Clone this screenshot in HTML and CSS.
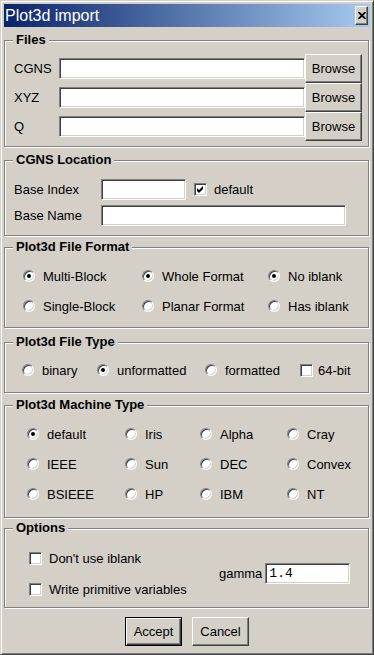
FILE: index.html
```html
<!DOCTYPE html>
<html>
<head>
	<title>Plot3d import</title>
	<meta name="viewport" content="width=device-width, initial-scale=1">
	<link rel="stylesheet" href="styles.css">
</head>
<body>
	<div class="window">
	<div class="titlebar">
		<span>Plot3d import</span>
		<span class="close-btn"><svg width="8" height="7" viewBox="0 0 8 7"><path d="M0.5 0 L7.5 7 M7.5 0 L0.5 7" stroke="#000" stroke-width="1.8"/></svg></span>
	</div>

	<fieldset class="group files">
		<legend>Files</legend>
		<div class="files-body">
			<span>CGNS</span><input class="field" type="text"><button class="btn">Browse</button>
			<span>XYZ</span><input class="field" type="text"><button class="btn">Browse</button>
			<span>Q</span><input class="field" type="text"><button class="btn">Browse</button>
		</div>
	</fieldset>

	<fieldset class="group location">
		<legend>CGNS Location</legend>
		<div class="location-body">
			<div class="row">
				<span class="row-label">Base Index</span>
				<input class="field short" type="text">
				<span class="check checked"><svg width="9" height="9" viewBox="0 0 9 9"><polygon points="1,3 3,5 7,1 7,4 3,8 1,6" fill="#000"/></svg></span>
				<span class="check-label">default</span>
			</div>
			<div class="row">
				<span class="row-label">Base Name</span>
				<input class="field long" type="text">
			</div>
		</div>
	</fieldset>

	<fieldset class="group format">
		<legend>Plot3d File Format</legend>
		<div class="format-body">
			<div class="opt"><span class="radio on"></span>Multi-Block</div>
			<div class="opt"><span class="radio on"></span>Whole Format</div>
			<div class="opt"><span class="radio on"></span>No iblank</div>
			<div class="opt"><span class="radio"></span>Single-Block</div>
			<div class="opt"><span class="radio"></span>Planar Format</div>
			<div class="opt"><span class="radio"></span>Has iblank</div>
		</div>
	</fieldset>

	<fieldset class="group filetype">
		<legend>Plot3d File Type</legend>
		<div class="type-body">
			<div class="opt"><span class="radio"></span>binary</div>
			<div class="opt"><span class="radio on"></span>unformatted</div>
			<div class="opt"><span class="radio"></span>formatted</div>
			<div class="opt tight"><span class="check"></span>64-bit</div>
		</div>
	</fieldset>

	<fieldset class="group machine">
		<legend>Plot3d Machine Type</legend>
		<div class="machine-body">
			<div class="opt"><span class="radio on"></span>default</div>
			<div class="opt"><span class="radio"></span>Iris</div>
			<div class="opt"><span class="radio"></span>Alpha</div>
			<div class="opt"><span class="radio"></span>Cray</div>
			<div class="opt"><span class="radio"></span>IEEE</div>
			<div class="opt"><span class="radio"></span>Sun</div>
			<div class="opt"><span class="radio"></span>DEC</div>
			<div class="opt"><span class="radio"></span>Convex</div>
			<div class="opt"><span class="radio"></span>BSIEEE</div>
			<div class="opt"><span class="radio"></span>HP</div>
			<div class="opt"><span class="radio"></span>IBM</div>
			<div class="opt"><span class="radio"></span>NT</div>
		</div>
	</fieldset>

	<fieldset class="group options">
		<legend>Options</legend>
		<div class="options-body">
			<div class="options-left">
				<div class="opt wide"><span class="check"></span>Don't use iblank</div>
				<div class="opt wide"><span class="check"></span>Write primitive variables</div>
			</div>
			<span>gamma</span>
			<input class="field gamma" type="text" value="1.4">
		</div>
	</fieldset>

	<div class="buttons">
		<button class="btn default-btn">Accept</button>
		<button class="btn">Cancel</button>
	</div>
	</div>
</body>
</html>
```

FILE: styles.css
```css
body {
  margin: 0;
  background: #d4d0c8;
}

/* outer dialog frame */
.window {
  width: 374px;
  height: 655px;
  box-sizing: border-box;
  background: #d4d0c8;
  border: 1px solid;
  border-color: #d4d0c8 #404040 #404040 #d4d0c8;
  box-shadow: inset 1px 1px #fff, inset -1px -1px #808080;
  padding: 3px 3px 0 3px;
  font-family: "Liberation Sans", Arial, sans-serif;
  font-size: 13px;
  color: #000;
}

.titlebar {
  height: 23px;
  display: flex;
  align-items: center;
  justify-content: space-between;
  padding: 0 2px 0 1px;
  background: linear-gradient(to right, #0a246a, #a6caf0);
  color: #fff;
  font-size: 16px;
}

.close-btn {
  width: 13px;
  height: 19px;
  box-sizing: border-box;
  display: flex;
  align-items: center;
  justify-content: center;
  background: #d4d0c8;
  border: 1px solid;
  border-color: #fff #404040 #404040 #fff;
  box-shadow: inset -1px -1px #808080;
}

/* etched group boxes */
.group {
  margin: 0 1px 0 0;
  padding: 0;
  min-width: 0;
  border: 1px solid #808080;
  box-shadow: inset 1px 1px #fff, 1px 1px #fff;
}
.group legend {
  margin-left: 8px;
  padding: 0 3px;
  line-height: 16px;
  font-weight: bold;
  background: #d4d0c8;
}

.files { margin-top: 5px; }
.location { margin-top: 5px; }
.format { margin-top: 3px; }
.filetype { margin-top: 6px; }
.machine { margin-top: 4px; }
.options { margin-top: 2px; }

/* sunken text fields */
.field {
  box-sizing: border-box;
  height: 21px;
  margin: 0;
  padding: 0 3px;
  border: 1px solid;
  border-color: #808080 #fff #fff #808080;
  box-shadow: inset 1px 1px #404040, inset -1px -1px #d4d0c8;
  background: #fff;
  font-family: "Liberation Mono", monospace;
  font-size: 13px;
  outline: none;
}

.btn {
  box-sizing: border-box;
  width: 57px;
  height: 29px;
  margin: 0;
  padding: 0;
  background: #d4d0c8;
  border: 1px solid;
  border-color: #fff #404040 #404040 #fff;
  box-shadow: inset -1px -1px #808080;
  font-family: "Liberation Sans", Arial, sans-serif;
  font-size: 13px;
  color: #000;
}
.default-btn {
  border-color: #000;
  box-shadow: inset 1px 1px #fff, inset -1px -1px #404040, inset -2px -2px #808080;
}

.files-body {
  display: grid;
  grid-template-columns: 45px 246px 57px;
  align-items: center;
  padding: 6px 6px 5px 9px;
}
.files-body .field {
  width: 246px;
}

.location-body {
  display: flex;
  flex-direction: column;
  gap: 5px;
  padding: 11px 0 9px 9px;
}
.row {
  display: flex;
  align-items: center;
}
.row-label {
  width: 87px;
}
.short { width: 85px; }
.long { width: 245px; }
.location-body .check {
  margin-left: 8px;
}
.check-label {
  margin-left: 7px;
}

/* radio and check boxes */
.radio {
  width: 12px;
  height: 12px;
  box-sizing: border-box;
  border-radius: 50%;
  border: 1px solid;
  border-color: #808080 #fff #fff #808080;
  box-shadow: inset 1px 1px #404040, inset -1px -1px #d4d0c8;
  background: #fff;
  display: flex;
  align-items: center;
  justify-content: center;
  flex: none;
}
.radio.on::after {
  content: "";
  width: 4px;
  height: 4px;
  border-radius: 50%;
  background: #000;
}
.check {
  width: 13px;
  height: 13px;
  box-sizing: border-box;
  border: 1px solid;
  border-color: #808080 #fff #fff #808080;
  box-shadow: inset 1px 1px #404040, inset -1px -1px #d4d0c8;
  background: #fff;
  display: flex;
  align-items: center;
  justify-content: center;
  flex: none;
}

.opt {
  display: flex;
  align-items: center;
  gap: 8px;
  height: 20px;
  white-space: nowrap;
}
.opt.tight { gap: 5px; }
.opt.wide { gap: 7px; }

.format-body {
  display: grid;
  grid-template-columns: 119px 126px auto;
  row-gap: 10px;
  padding: 11px 0 11px 18px;
}
.type-body {
  display: grid;
  grid-template-columns: 75px 108px 95px auto;
  padding: 10px 0 12px 17px;
}
.machine-body {
  display: grid;
  grid-template-columns: 98px 75px 87px auto;
  row-gap: 10px;
  padding: 11px 0 13px 22px;
}

.options-body {
  display: flex;
  align-items: center;
  padding: 12px 0 8px 24px;
}
.options-left {
  width: 190px;
  display: flex;
  flex-direction: column;
  gap: 11px;
}
.gamma {
  width: 85px;
  margin-left: 3px;
}

.buttons {
  display: flex;
  justify-content: center;
  gap: 10px;
  margin-top: 9px;
}
```
